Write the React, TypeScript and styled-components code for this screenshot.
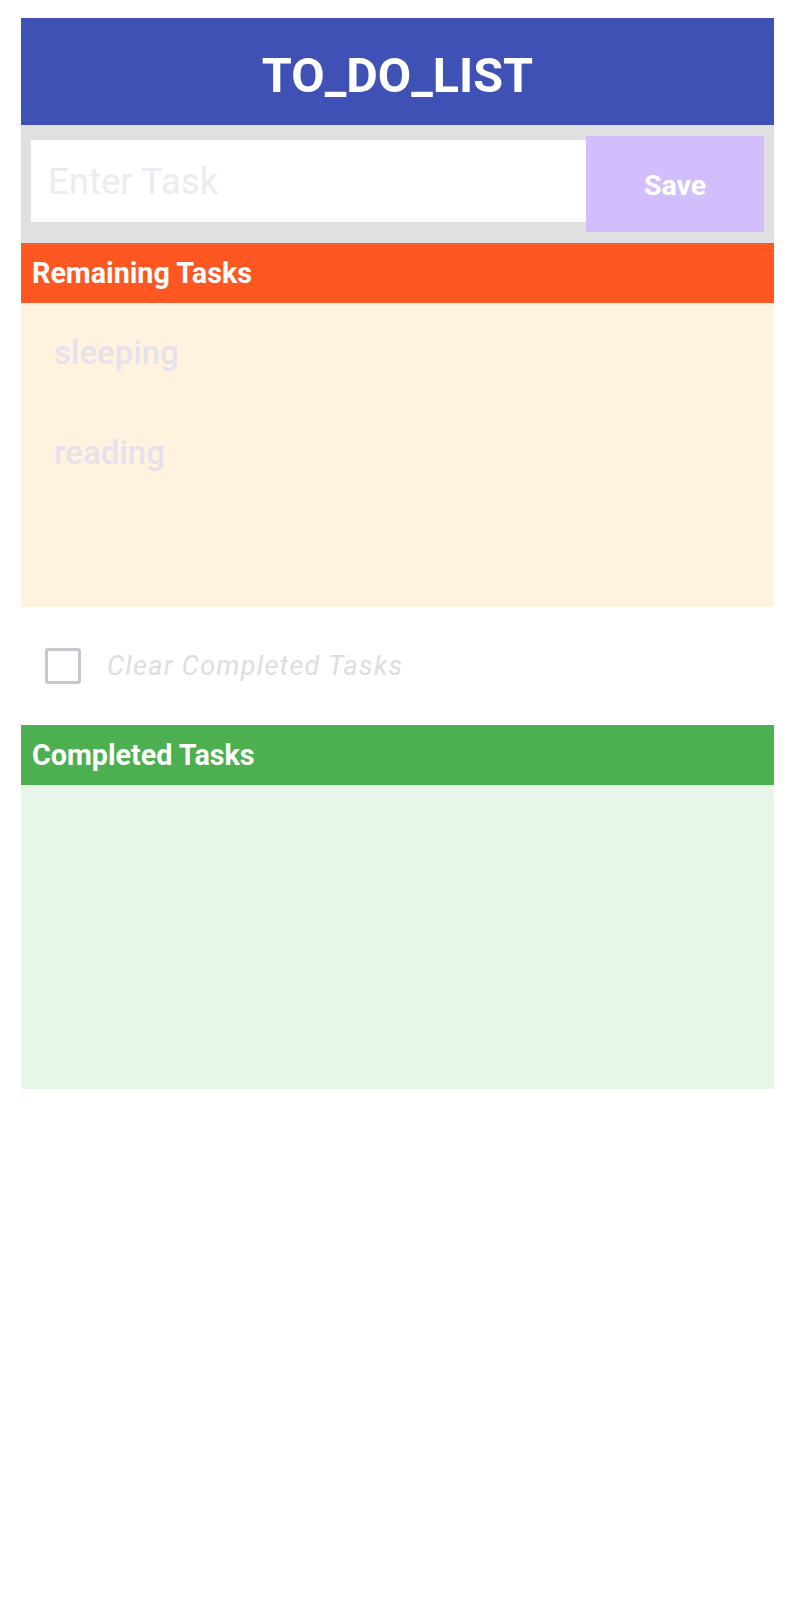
import styled, { createGlobalStyle } from "styled-components";
import { useState } from "react";

// style
const GlobalStyle = createGlobalStyle`
  body {
    margin: 0;
    background: #fff;
    font-family: Roboto, "Liberation Sans", sans-serif;
  }
  * {
    box-sizing: border-box;
  }
`;
const Wrapper = styled.main`
  display: flex;
  flex-direction: column;
  margin: 18px 21px 0;
`;
const Header = styled.header`
  display: flex;
  justify-content: center;
  height: 107px;
  padding-top: 8px;
  background-color: #3f51b5;
`;
const Title = styled.h1`
  margin: 0;
  font-size: 48.5px;
  font-weight: 700;
  line-height: 99px;
  color: #fff;
`;
const InputBar = styled.form`
  display: flex;
  height: 118px;
  padding: 11px 10px;
  background-color: #e0e0e0;
`;
const TaskInput = styled.input`
  flex: 1;
  min-width: 0;
  height: 82px;
  margin-top: 4px;
  padding: 0 17px;
  border: none;
  outline: none;
  background: #fff;
  font-family: inherit;
  font-size: 36.6px;
  color: #333;
  &::placeholder {
    color: #ecebf1;
  }
`;
const SaveButton = styled.button`
  width: 178px;
  height: 96px;
  border: none;
  background-color: #d2befd;
  font-family: inherit;
  font-size: 28.5px;
  font-weight: 700;
  color: #fff;
  padding-top: 4px;
`;
const SectionTitle = styled.h2<{ $color: string }>`
  display: flex;
  align-items: center;
  height: 60px;
  margin: 0;
  padding: 0 11px;
  font-size: 28.7px;
  font-weight: 700;
  color: #fff;
  background-color: ${(props) => props.$color};
`;
const TaskList = styled.ul<{ $bg: string }>`
  height: 304px;
  margin: 0;
  padding: 0;
  list-style: none;
  background-color: ${(props) => props.$bg};
`;
const TaskItem = styled.li`
  height: 100px;
  padding-left: 33px;
  font-size: 33px;
  font-weight: 500;
  line-height: 100px;
  color: #e6e2ec;
`;
const ClearRow = styled.label`
  display: flex;
  align-items: center;
  gap: 26px;
  height: 118px;
  padding-left: 24px;
`;
const CheckBox = styled.span<{ $checked: boolean }>`
  width: 36px;
  height: 36px;
  border: 3px solid #c8c7d0;
  border-radius: 3px;
  background: ${(props) => (props.$checked ? "#c8c7d0" : "#fff")};
`;
const ClearText = styled.span`
  font-size: 27px;
  font-style: italic;
  letter-spacing: 1.3px;
  color: #dedce4;
`;

// content
const remaining = ["sleeping", "reading"];

const App = () => {
  const [clear, setClear] = useState<boolean>(false);

  return (
    <Wrapper>
      <GlobalStyle />
      <Header>
        <Title>TO_DO_LIST</Title>
      </Header>
      <InputBar onSubmit={(e) => e.preventDefault()}>
        <TaskInput placeholder="Enter Task" />
        <SaveButton type="submit">Save</SaveButton>
      </InputBar>
      <SectionTitle $color="#ff5722">Remaining Tasks</SectionTitle>
      <TaskList $bg="#fff3e0">
        {remaining.map((task) => (
          <TaskItem key={task}>{task}</TaskItem>
        ))}
      </TaskList>
      <ClearRow onClick={() => setClear(!clear)}>
        <CheckBox $checked={clear} />
        <ClearText>Clear Completed Tasks</ClearText>
      </ClearRow>
      <SectionTitle $color="#4caf50">Completed Tasks</SectionTitle>
      <TaskList $bg="#e8f5e9" />
    </Wrapper>
  );
};

export default App;
